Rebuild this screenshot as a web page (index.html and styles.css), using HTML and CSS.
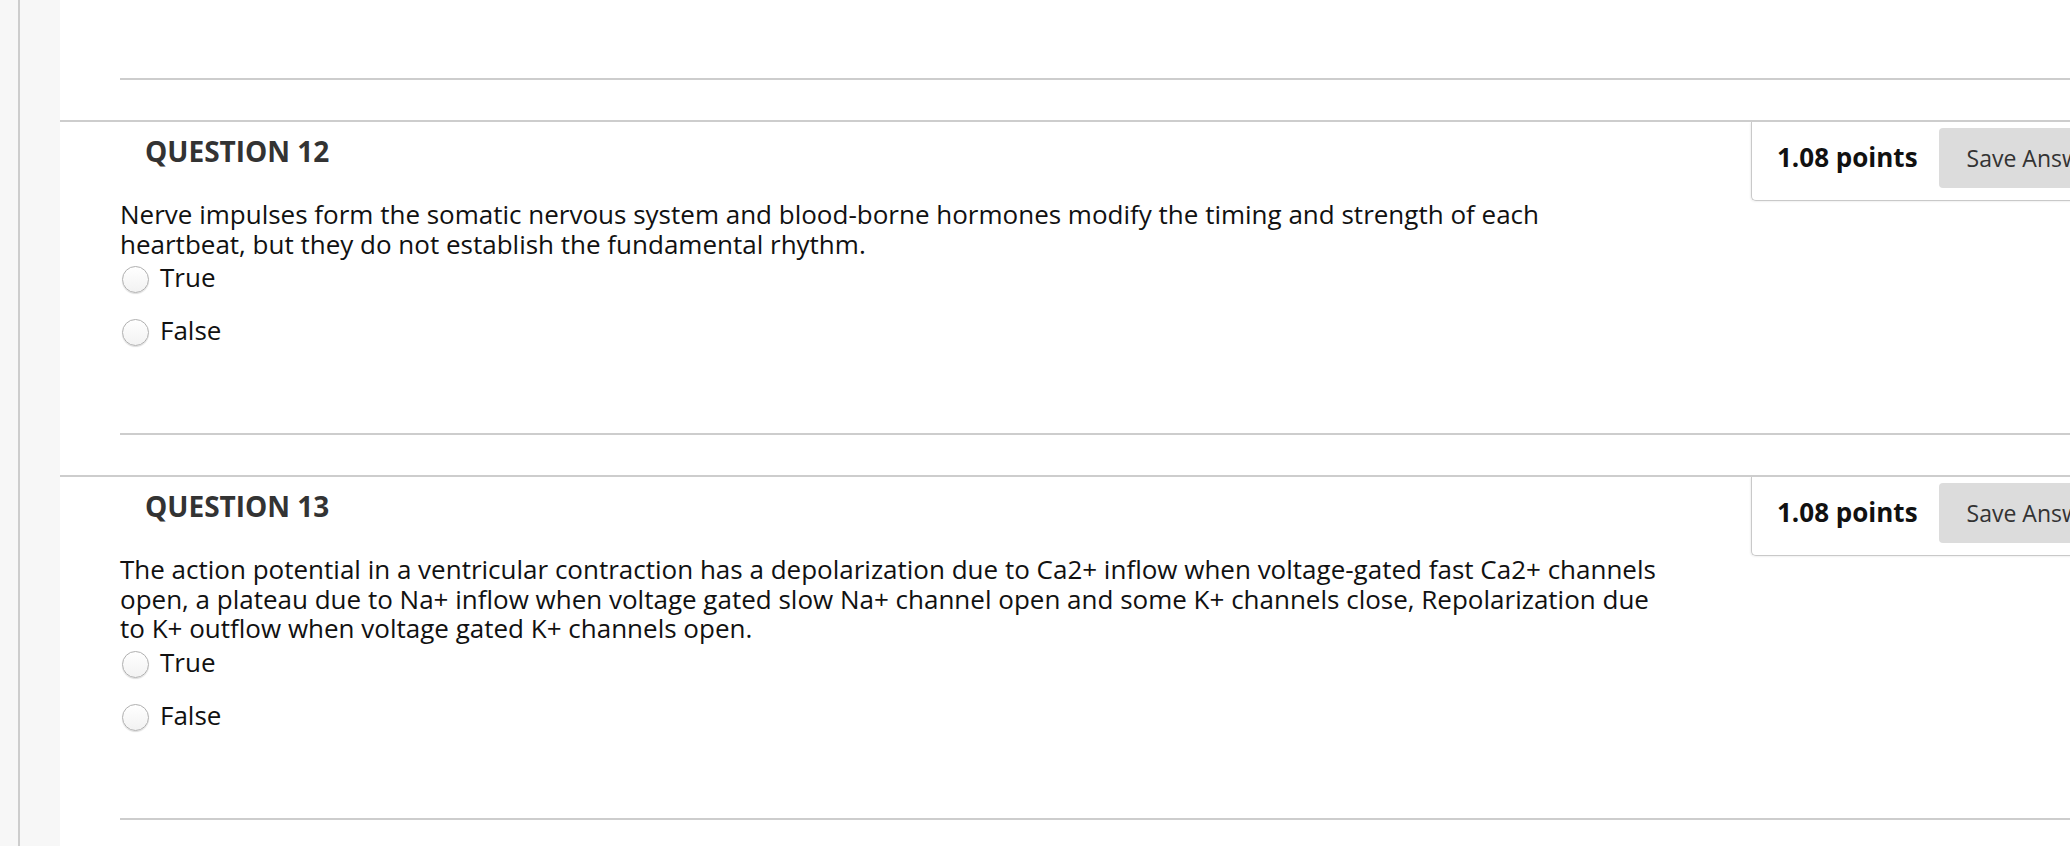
FILE: index.html
```html
<!DOCTYPE html>
<html lang="en">
<head>
<meta charset="utf-8">
<title>Test</title>
<link rel="stylesheet" href="styles.css">
</head>
<body>
<div class="page">
  <div class="rail"></div>
  <main class="content">
    <div class="prev-end"><hr class="rule"></div>

    <section class="question">
      <div class="q-header">
        <h3 class="q-title">QUESTION 12</h3>
        <div class="points-box">
          <span class="points">1.08 points</span>
          <button class="save-btn" type="button">Save Answer</button>
        </div>
      </div>
      <p class="q-text">Nerve impulses form the somatic nervous system and blood-borne hormones modify the timing and strength of each heartbeat, but they do not establish the fundamental rhythm.</p>
      <ul class="options">
        <li class="option"><span class="radio"></span><span class="opt-label">True</span></li>
        <li class="option"><span class="radio"></span><span class="opt-label">False</span></li>
      </ul>
      <hr class="rule">
    </section>

    <section class="question">
      <div class="q-header">
        <h3 class="q-title">QUESTION 13</h3>
        <div class="points-box">
          <span class="points">1.08 points</span>
          <button class="save-btn" type="button">Save Answer</button>
        </div>
      </div>
      <p class="q-text">The action potential in a ventricular contraction has a depolarization due to Ca2+ inflow when voltage-gated fast Ca2+ channels open, a plateau due to Na+ inflow when voltage gated slow Na+ channel open and some K+ channels close, Repolarization due to K+ outflow when voltage gated K+ channels open.</p>
      <ul class="options">
        <li class="option"><span class="radio"></span><span class="opt-label">True</span></li>
        <li class="option"><span class="radio"></span><span class="opt-label">False</span></li>
      </ul>
      <hr class="rule">
    </section>
  </main>
</div>
</body>
</html>
```

FILE: styles.css
```css
* { box-sizing: border-box; }

html, body {
  margin: 0;
  padding: 0;
  overflow: hidden;
  background: #f7f7f7;
}

body {
  font-family: "Open Sans", "Noto Sans", "Liberation Sans", sans-serif;
  color: #111;
}

.page {
  display: flex;
  min-height: 846px;
  background: #f7f7f7;
  padding-left: 18px;
}

.rail {
  flex: none;
  width: 42px;
  border-left: 2px solid #cdcdcd;
  background: #f7f7f7;
}

.content {
  flex: none;
  width: 2111px;
  background: #fff;
}

.prev-end {
  padding: 78px 0 40px 60px;
}

.rule {
  margin: 0;
  border: 0;
  height: 2px;
  background: #cdcdcd;
}

.question {
  border-top: 2px solid #cdcdcd;
  padding: 0 0 40px 60px;
}

.q-header {
  display: flex;
  align-items: flex-start;
  justify-content: space-between;
}

.q-title {
  margin: 10px 0 0 25px;
  font-size: 28px;
  font-weight: 700;
  color: #333;
  line-height: normal;
}

.points-box {
  flex: none;
  width: 420px;
  height: 79px;
  display: flex;
  align-items: center;
  padding: 6px 0 12px 25px;
  border-left: 1px solid #c9c9c9;
  border-bottom: 1px solid #c9c9c9;
  border-bottom-left-radius: 5px;
  box-shadow: -1px 1px 2px rgba(0, 0, 0, 0.06);
  background: #fff;
}

.points {
  font-size: 26px;
  font-weight: 700;
  color: #111;
  white-space: nowrap;
  margin-bottom: 3px;
}

.save-btn {
  margin-left: 21px;
  height: 60px;
  padding: 0 28px;
  border: 0;
  border-radius: 4px;
  background: #dcdcdc;
  font-family: "Open Sans", "Noto Sans", "Liberation Sans", sans-serif;
  font-size: 23px;
  color: #333;
  white-space: nowrap;
}

.q-text {
  margin: -1px 0 0 0;
  font-size: 26px;
  line-height: 29.5px;
  color: #111;
  max-width: 1545px;
}

.options {
  list-style: none;
  margin: 4px 0 87px 0;
  padding: 0;
  display: flex;
  flex-direction: column;
  gap: 23px;
}

.option {
  display: flex;
  align-items: flex-start;
  font-size: 26px;
  line-height: 29.5px;
  color: #111;
}

.radio {
  flex: none;
  width: 27px;
  height: 27px;
  margin: 3px 11px 0 2px;
  border-radius: 50%;
  border: 1px solid #b0b0b0;
  background: linear-gradient(#ffffff, #f2f2f2);
  box-shadow: 0 1px 1px rgba(0, 0, 0, 0.14);
}
```
